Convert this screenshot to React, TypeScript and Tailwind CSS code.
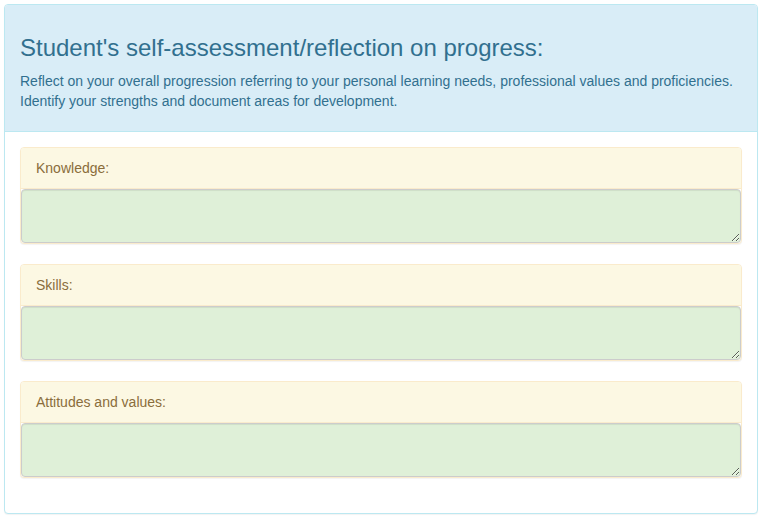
import React from "react";

const items = ["Knowledge:", "Skills:", "Attitudes and values:"];

export default function App() {
  return (
    <div className="p-[4px] bg-white" style={{ fontFamily: '"Liberation Sans", Arial, sans-serif' }}>
      <div className="border border-[#bce8f1] rounded-[4px] bg-white shadow-[0_1px_1px_rgba(0,0,0,0.05)]">
        <div className="bg-[#d9edf7] text-[#31708f] border-b border-[#bce8f1] rounded-t-[3px] px-[15px] py-[10px]">
          <h3 className="mt-[20px] mb-[10px] text-[24px] leading-[1.1] font-normal">
            Student's self-assessment/reflection on progress:
          </h3>
          <p className="text-[14px] leading-[20px] mb-[10px]">
            Reflect on your overall progression referring to your personal learning needs, professional values and proficiencies. Identify your strengths and document areas for development.
          </p>
        </div>
        <div className="p-[15px] flex flex-col gap-[20px] pb-[35px]">
          {items.map((label) => (
            <div
              key={label}
              className="border border-[#faebcc] rounded-[4px] bg-white shadow-[0_1px_1px_rgba(0,0,0,0.05)]"
            >
              <div className="bg-[#fcf8e3] text-[#8a6d3b] border-b border-[#faebcc] px-[15px] py-[10px] text-[14px] leading-[20px] rounded-t-[3px]">
                {label}
              </div>
              <textarea
                className="block w-full h-[54px] bg-[#dff0d8] border border-[#ccc] rounded-[4px] shadow-[inset_0_1px_1px_rgba(0,0,0,0.075)] px-[12px] py-[6px] text-[14px] text-[#555] outline-none resize-y"
              />
            </div>
          ))}
        </div>
      </div>
    </div>
  );
}
